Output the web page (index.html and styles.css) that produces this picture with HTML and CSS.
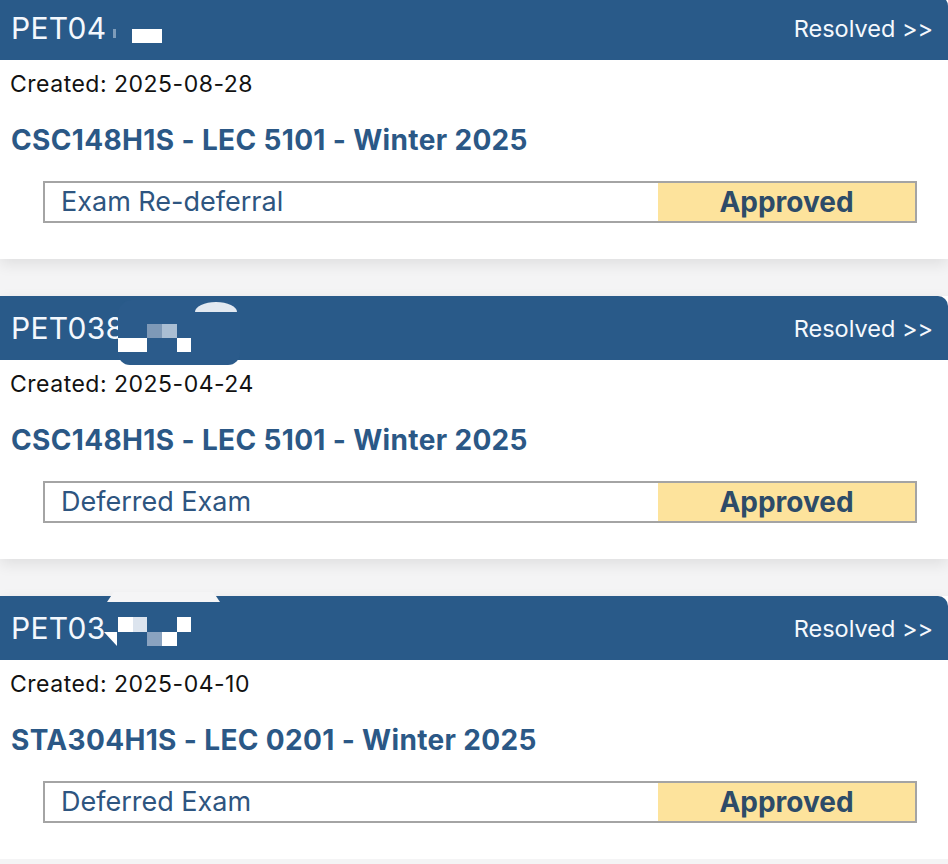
FILE: index.html
```html
<!DOCTYPE html>
<html lang="en">
<head>
<meta charset="utf-8">
<title>Petitions</title>
<link rel="stylesheet" href="styles.css">
</head>
<body>
<main class="list">
  <section class="card">
    <header class="card-head">
      <span class="pet-id">PET04</span>
      <a class="status-link" href="#">Resolved &gt;&gt;</a>
      <span class="mask m1-dot"></span>
      <span class="mask m1-rect"></span>
    </header>
    <div class="card-body">
      <p class="created">Created: 2025-08-28</p>
      <h2 class="course">CSC148H1S - LEC 5101 - Winter 2025</h2>
      <div class="req">
        <span class="req-type">Exam Re-deferral</span>
        <span class="req-status">Approved</span>
      </div>
    </div>
  </section>

  <section class="card">
    <header class="card-head">
      <span class="pet-id">PET038</span>
      <a class="status-link" href="#">Resolved &gt;&gt;</a>
      <span class="mask m2-blob"></span>
      <span class="mask m2-arc"></span>
      <span class="mask m2-a"></span>
      <span class="mask m2-b"></span>
      <span class="mask m2-c"></span>
      <span class="mask m2-d"></span>
    </header>
    <div class="card-body">
      <p class="created">Created: 2025-04-24</p>
      <h2 class="course">CSC148H1S - LEC 5101 - Winter 2025</h2>
      <div class="req">
        <span class="req-type">Deferred Exam</span>
        <span class="req-status">Approved</span>
      </div>
    </div>
  </section>

  <section class="card">
    <header class="card-head">
      <span class="pet-id">PET03</span>
      <a class="status-link" href="#">Resolved &gt;&gt;</a>
      <span class="mask m3-bump"></span>
      <span class="mask m3-a"></span>
      <span class="mask m3-b"></span>
      <span class="mask m3-c"></span>
      <span class="mask m3-d"></span>
      <span class="mask m3-e"></span>
      <span class="mask m3-f"></span>
    </header>
    <div class="card-body">
      <p class="created">Created: 2025-04-10</p>
      <h2 class="course">STA304H1S - LEC 0201 - Winter 2025</h2>
      <div class="req">
        <span class="req-type">Deferred Exam</span>
        <span class="req-status">Approved</span>
      </div>
    </div>
  </section>
</main>
</body>
</html>
```

FILE: styles.css
```css
* { box-sizing: border-box; }

html, body {
  margin: 0;
  padding: 0;
  background: #f4f4f5;
  font-family: Inter, "Liberation Sans", Arial, sans-serif;
  overflow: hidden;
}

.list {
  display: flex;
  flex-direction: column;
  gap: 37px;
  margin-top: -4px;
}

.card {
  background: #ffffff;
  box-shadow: 0 5px 14px rgba(0, 0, 0, 0.09);
}

.card-head {
  position: relative;
  height: 64px;
  background: #295a89;
  border-top-right-radius: 10px;
  display: flex;
  align-items: center;
  justify-content: space-between;
  padding: 0 15px 0 11px;
  color: #f4f8fd;
}

.pet-id {
  font-size: 30px;
  letter-spacing: 0.3px;
}

.status-link {
  color: #f4f8fd;
  text-decoration: none;
  font-size: 23.5px;
}

.card-body {
  padding: 10px 31px 36px 10px;
}

.created {
  margin: 0;
  font-size: 23px;
  line-height: 28px;
  letter-spacing: 0.5px;
  color: #121212;
}

.course {
  margin: 25px 0 0 1px;
  font-size: 28px;
  line-height: 34px;
  font-weight: 700;
  letter-spacing: 0.35px;
  color: #2b5886;
}

.req {
  margin: 24px 0 0 33px;
  height: 42px;
  border: 2px solid #a4a4a4;
  display: flex;
}

.req-type {
  flex: 1;
  padding-left: 16px;
  font-size: 27px;
  line-height: 38px;
  color: #2e5580;
}

.req-status {
  width: 257px;
  background: #fde39c;
  text-align: center;
  font-size: 28px;
  line-height: 38px;
  font-weight: 700;
  color: #2d4b68;
}

/* redaction overlays on the petition ids */
.mask {
  position: absolute;
  display: block;
}

.m1-dot {
  left: 113px; top: 33px; width: 3px; height: 9px;
  background: #b8c8da;
  opacity: 0.6;
}
.m1-rect {
  left: 132px; top: 33px; width: 30px; height: 14px;
  background: #ffffff;
}

.m2-blob {
  left: 118px; top: 4px; width: 122px; height: 65px;
  background: #2b5b8b;
  border-radius: 14px 14px 12px 12px;
  z-index: 1;
}
.m2-arc {
  left: 195px; top: 6px; width: 42px; height: 10px;
  background: #e3e9f1;
  border-radius: 50% 50% 0 0 / 100% 100% 0 0;
  z-index: 2;
}
.m2-a { left: 118px; top: 42px; width: 29px; height: 14px; background: #ffffff; z-index: 2; }
.m2-b { left: 147px; top: 28px; width: 15px; height: 14px; background: #7e99b7; z-index: 2; }
.m2-c { left: 162px; top: 28px; width: 15px; height: 14px; background: #aabed3; z-index: 2; }
.m2-d { left: 177px; top: 42px; width: 14px; height: 14px; background: #ffffff; z-index: 2; }

.m3-bump {
  left: 107px; top: -4px; width: 113px; height: 10px;
  background: #f5f5f6;
  clip-path: polygon(0 100%, 6% 0, 94% 0, 100% 100%);
}
.m3-a { left: 118px; top: 21px; width: 15px; height: 15px; background: #ffffff; }
.m3-b { left: 133px; top: 21px; width: 14px; height: 15px; background: #dce4ee; }
.m3-c { left: 177px; top: 21px; width: 14px; height: 15px; background: #ffffff; }
.m3-d {
  left: 104px; top: 36px; width: 13px; height: 14px; background: #ffffff;
  clip-path: polygon(0 0, 100% 0, 100% 100%);
}
.m3-e { left: 147px; top: 36px; width: 15px; height: 14px; background: #8aa3c0; }
.m3-f { left: 162px; top: 36px; width: 15px; height: 14px; background: #ffffff; }
```
